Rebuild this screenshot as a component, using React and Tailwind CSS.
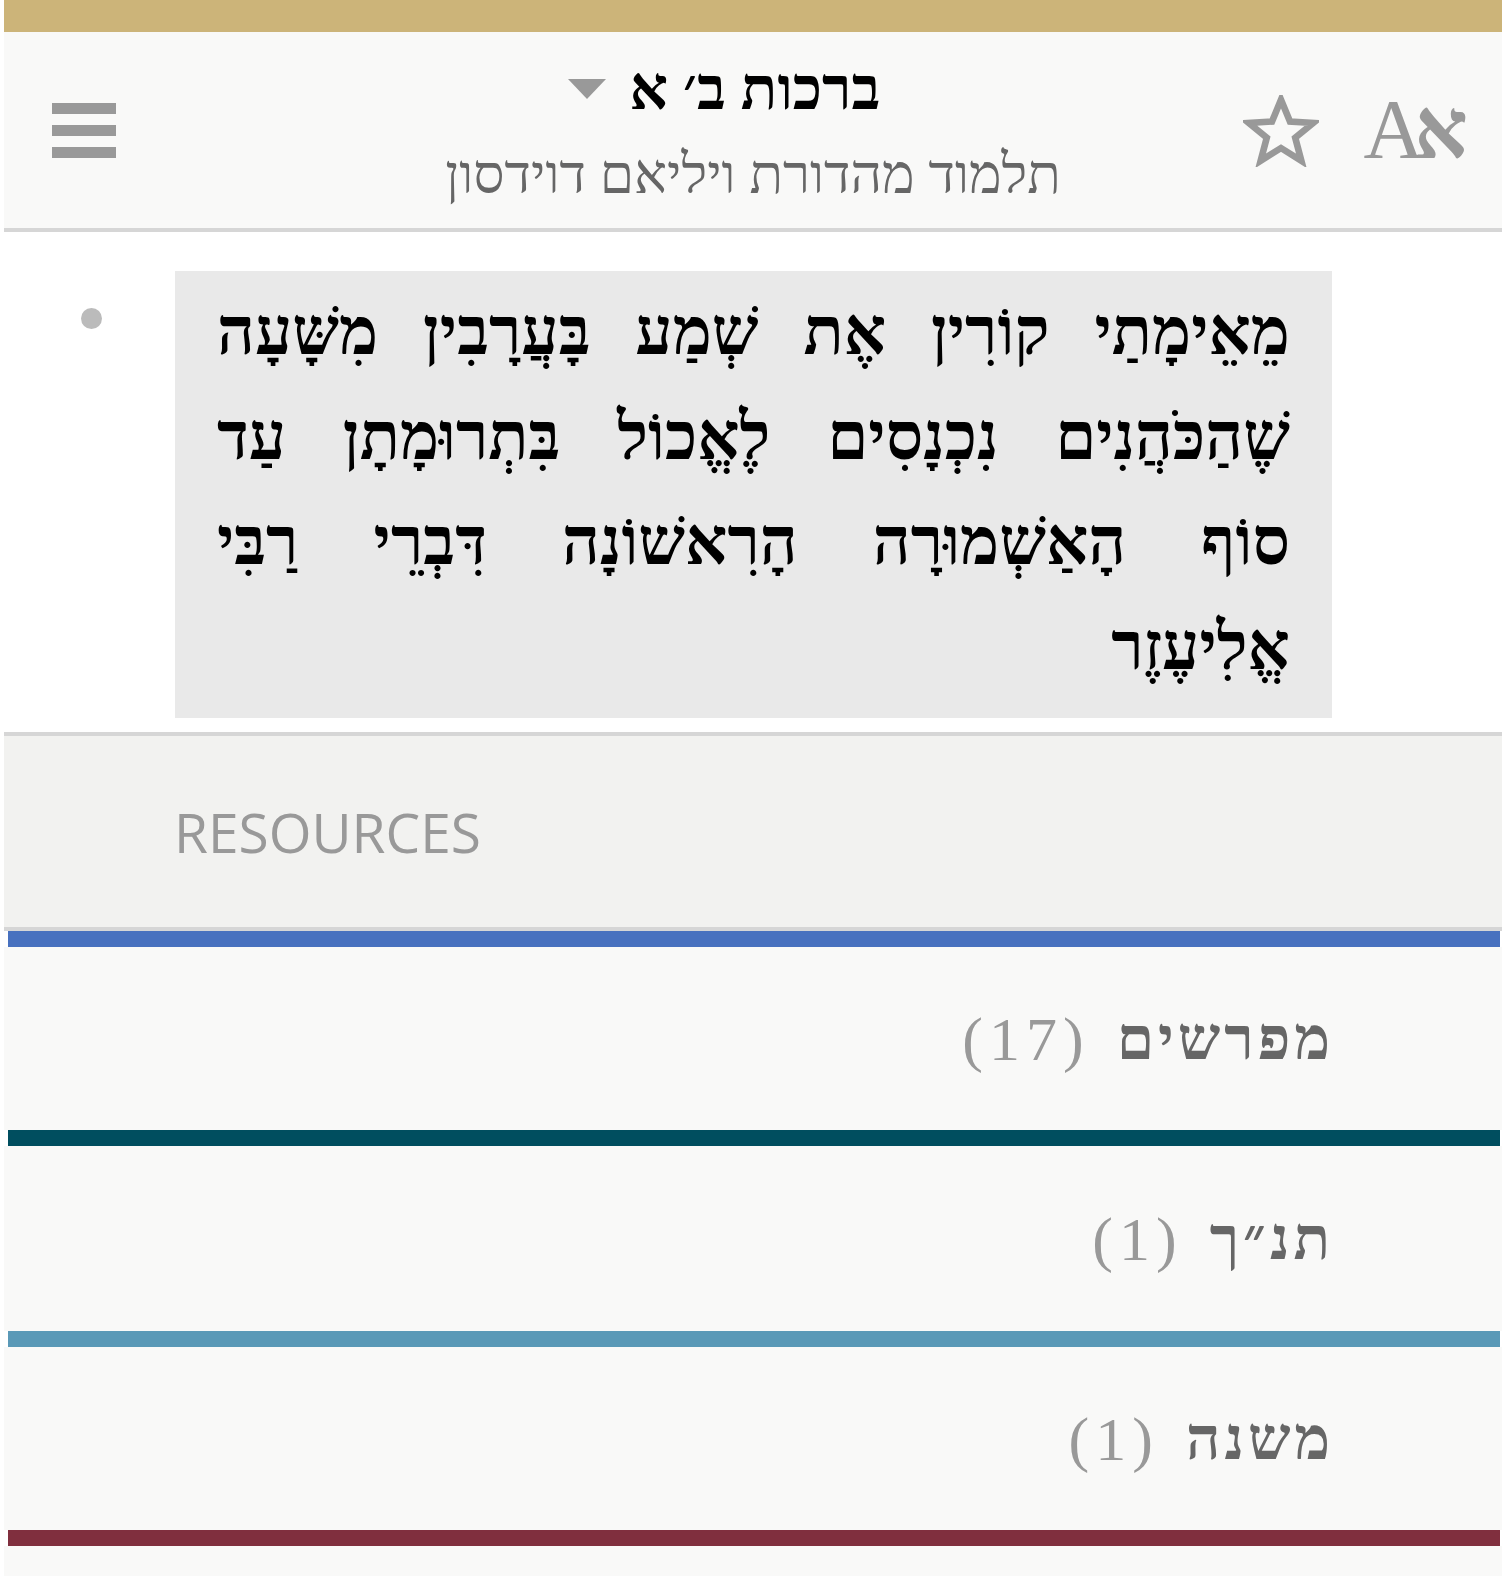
import React from "react";

const serif = "font-['Liberation_Serif','DejaVu_Serif',serif]";

function Star() {
  return (
    <svg width="76" height="72" viewBox="0 0 80 76" className="block">
      <polygon
        points="40,5 49.5,28 74,29.5 55,45 61.5,69.5 40,56 18.5,69.5 25,45 6,29.5 30.5,28"
        fill="none"
        stroke="#999999"
        strokeWidth="7"
        strokeLinejoin="miter"
      />
    </svg>
  );
}

function Row({ color, label, count, h }) {
  return (
    <>
      <div className={`h-[16px] ml-[4px] mr-[2px] ${color}`} />
      <div className={`${h} bg-[#f9f9f8] flex items-center justify-end pr-[168px]`}>
        <div dir="rtl" className={`${serif} flex items-center gap-[27px] leading-none whitespace-nowrap`}>
          <span className="text-[60px] text-[#666666] font-bold tracking-[4px]">{label}</span>
          <span className="text-[62px] text-[#999999] tracking-[6px]">({count})</span>
        </div>
      </div>
    </>
  );
}

export default function App() {
  return (
    <div className="min-h-[1576px] bg-white pl-[4px]">
      <div className="h-[32px] bg-[#ccb479]" />
      <header className="h-[200px] bg-[#f9f9f8] border-b-4 border-[#d6d6d6] grid grid-cols-[1fr_auto_1fr] items-center">
        <div className="flex items-center pl-[48px]">
          <div className="flex flex-col gap-[11px] w-[64px]">
            <div className="h-[11px] bg-[#999999]" />
            <div className="h-[11px] bg-[#999999]" />
            <div className="h-[11px] bg-[#999999]" />
          </div>
        </div>
        <div className="flex flex-col items-center">
          <div className="flex items-center mr-[58px]">
            <div className="w-0 h-0 border-l-[19px] border-r-[19px] border-t-[20px] border-l-transparent border-r-transparent border-t-[#999999] mr-[24px]" />
            <div dir="rtl" className={`${serif} text-[60px] font-bold leading-none text-black`}>
              ברכות ב׳ א
            </div>
          </div>
          <div dir="rtl" className={`${serif} text-[55px] leading-none text-[#666666] mt-[28px]`}>
            תלמוד מהדורת ויליאם דוידסון
          </div>
        </div>
        <div className="flex items-center justify-end pr-[34px]">
          <div className="mr-[44px] mt-[2px]">
            <Star />
          </div>
          <div dir="ltr" className={`${serif} text-[#999999] text-[84px] leading-none whitespace-nowrap`}>
            <span className="tracking-[-10px]">A</span><span className="font-bold">א</span>
          </div>
        </div>
      </header>

      <section className="bg-white border-b-4 border-[#d6d6d6] pt-[39px] pb-[14px] flex">
        <div className="w-[171px] shrink-0">
          <div className="ml-[77px] mt-[37px] w-[21px] h-[21px] rounded-full bg-[#bbbbbb]" />
        </div>
        <div className="w-[1157px] bg-[#e9e9e9] px-[42px] pt-[8px] pb-[19px]">
          <div dir="rtl" className={`${serif} text-[66px] font-bold leading-[105px] text-black`}>
            <div className="text-justify [text-align-last:justify] whitespace-nowrap">מֵאֵימָתַי קוֹרִין אֶת שְׁמַע בָּעֲרָבִין מִשָּׁעָה</div>
            <div className="text-justify [text-align-last:justify] whitespace-nowrap">שֶׁהַכֹּהֲנִים נִכְנָסִים לֶאֱכוֹל בִּתְרוּמָתָן עַד</div>
            <div className="text-justify [text-align-last:justify] whitespace-nowrap">סוֹף הָאַשְׁמוּרָה הָרִאשׁוֹנָה דִּבְרֵי רַבִּי</div>
            <div className="text-right">אֱלִיעֶזֶר</div>
          </div>
        </div>
      </section>

      <div className="h-[195px] bg-[#f2f2f0] border-b-4 border-[#d6d6d6] flex items-center pl-[170px]">
        <span className="font-['Open_Sans',sans-serif] text-[55px] leading-none text-[#999999]">RESOURCES</span>
      </div>

      <Row color="bg-[#4871bf]" label="מפרשים" count="17" h="h-[183px]" />
      <Row color="bg-[#004e5f]" label="תנ״ך" count="1" h="h-[185px]" />
      <Row color="bg-[#5a99b7]" label="משנה" count="1" h="h-[183px]" />
      <div className="h-[16px] ml-[4px] mr-[2px] bg-[#802f3e]" />
      <div className="h-[40px] bg-[#f9f9f8]" />
    </div>
  );
}
